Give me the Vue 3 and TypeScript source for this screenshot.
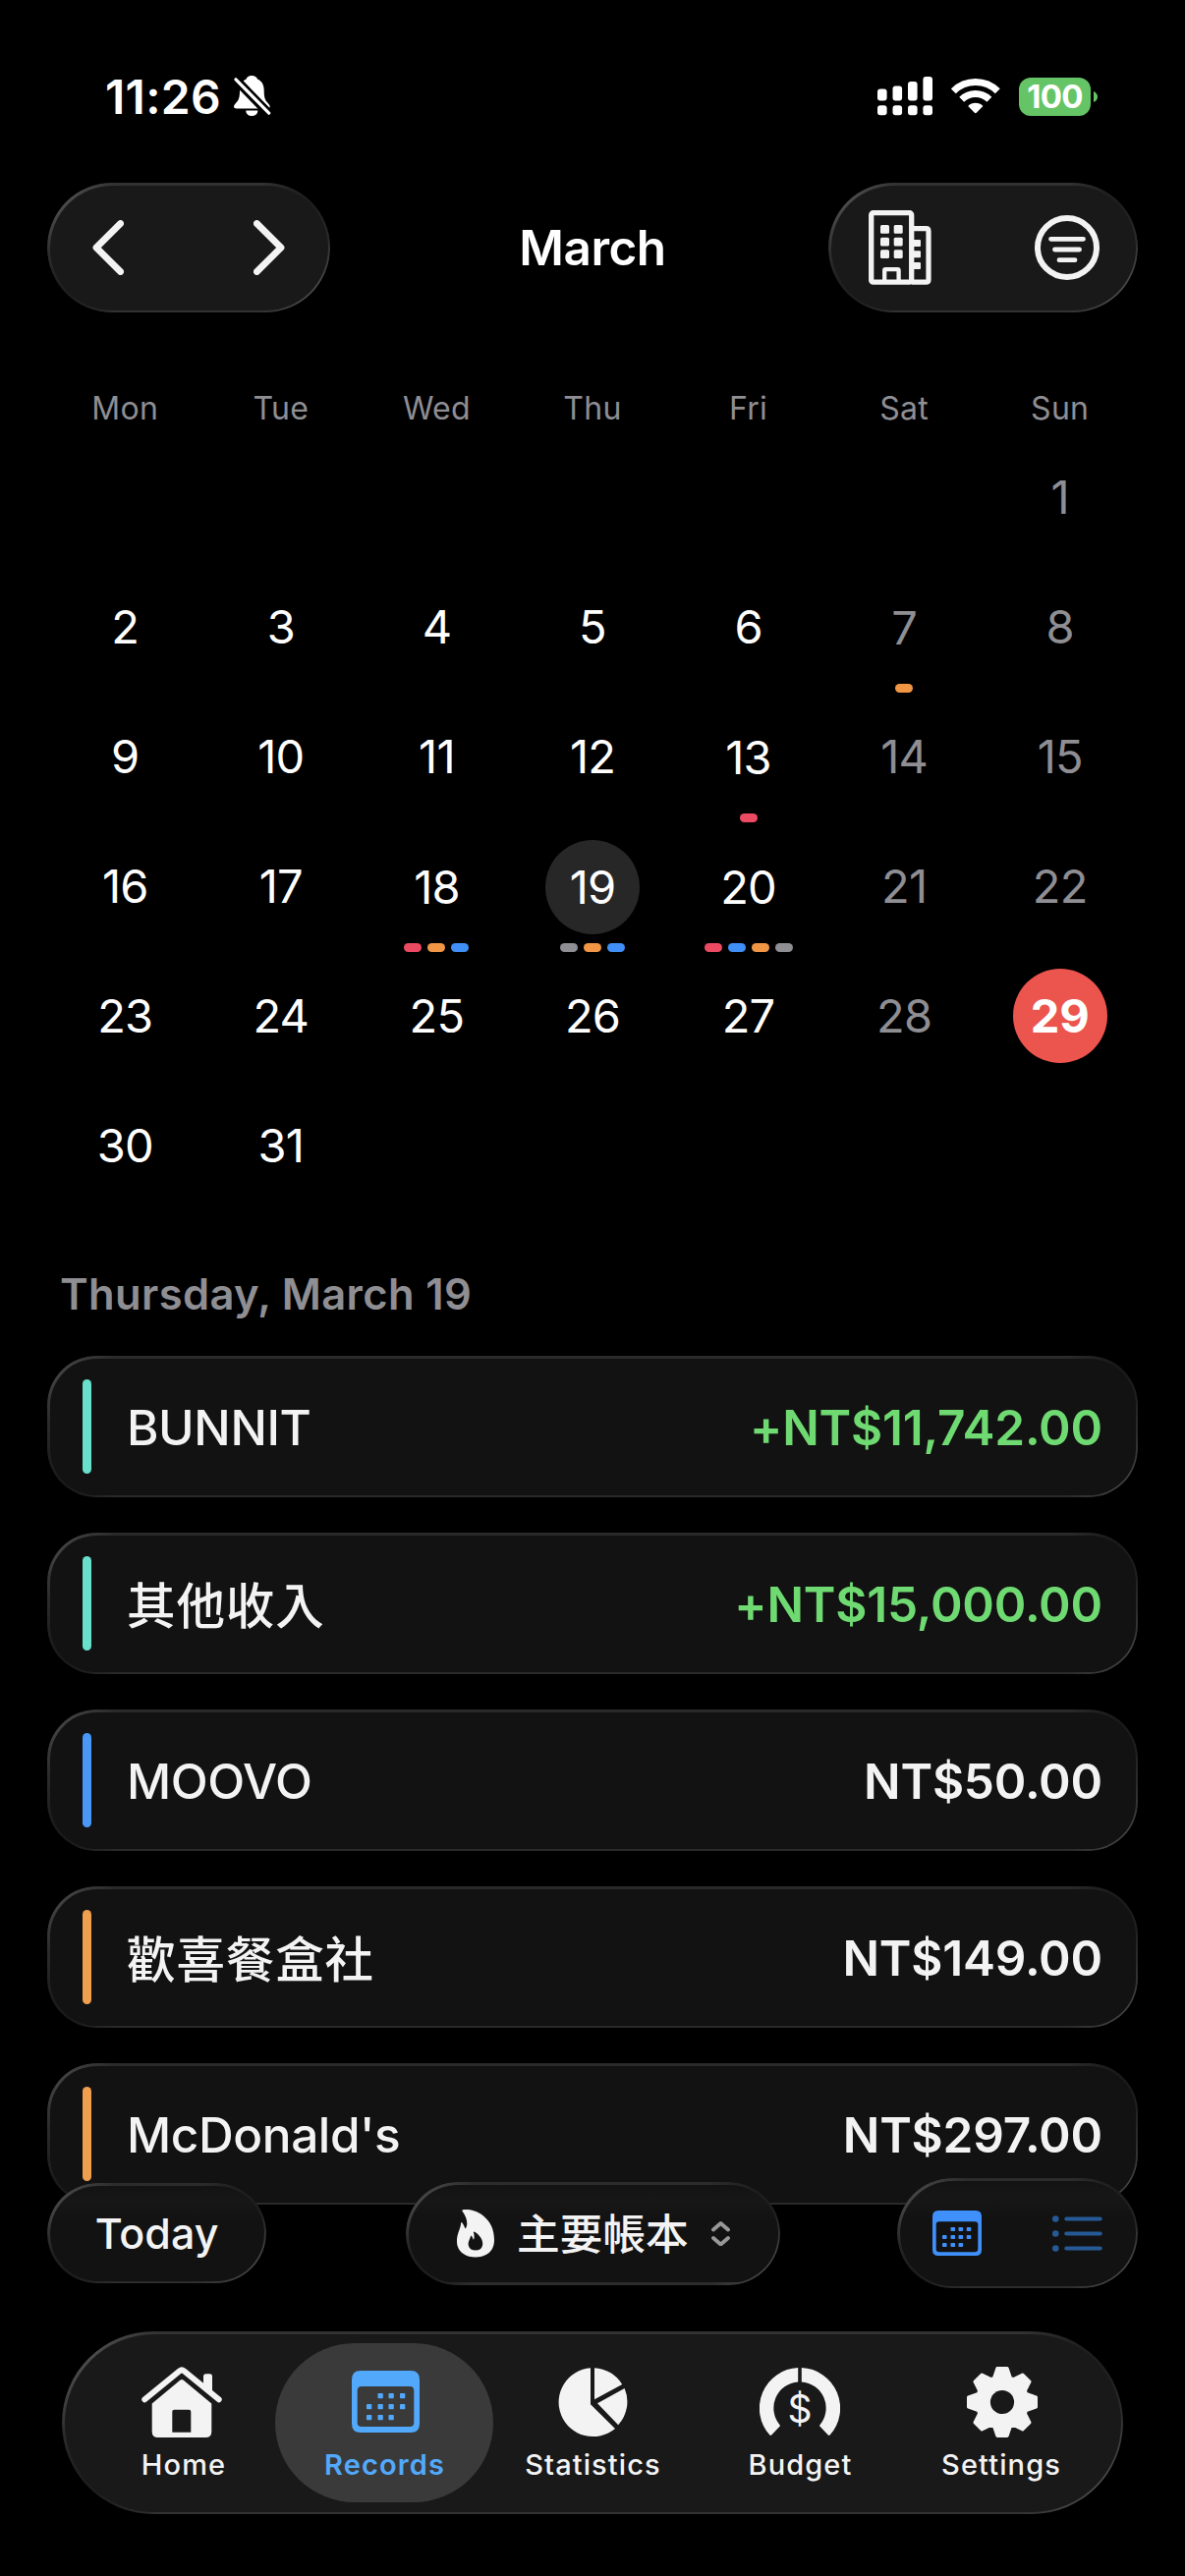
<script setup lang="ts">
interface DayCell {
  day: number | null
  weekend: boolean
  dots: string[]
}

interface RecordRow {
  name: string
  cjk?: boolean
  amount: string
  income: boolean
  color: string
}

const weekdays: string[] = ['Mon', 'Tue', 'Wed', 'Thu', 'Fri', 'Sat', 'Sun']

const RED = '#ec4a62'
const ORANGE = '#f09645'
const BLUE = '#3f8ff7'
const GRAY = '#8e8e93'

const dotMap: Record<number, string[]> = {
  7: [ORANGE],
  13: [RED],
  18: [RED, ORANGE, BLUE],
  19: [GRAY, ORANGE, BLUE],
  20: [RED, BLUE, ORANGE, GRAY],
}

const today = 29
const selected = 19

// March starts on a Sunday; weeks start on Monday.
const cells: DayCell[] = Array.from({ length: 42 }, (_, i) => {
  const n = i - 5
  const day = n >= 1 && n <= 31 ? n : null
  return { day, weekend: i % 7 >= 5, dots: day ? dotMap[day] ?? [] : [] }
})

const records: RecordRow[] = [
  { name: 'BUNNIT', amount: '+NT$11,742.00', income: true, color: '#68e0cc' },
  { name: '其他收入', cjk: true, amount: '+NT$15,000.00', income: true, color: '#68e0cc' },
  { name: 'MOOVO', amount: 'NT$50.00', income: false, color: '#4a97f8' },
  { name: '歡喜餐盒社', cjk: true, amount: 'NT$149.00', income: false, color: '#f09f4f' },
  { name: "McDonald's", amount: 'NT$297.00', income: false, color: '#f09f4f' },
]

// Eight teeth rotated round the origin.
const gearPath = (() => {
  const tooth: [number, number][] = [[-8.3, -24.5], [-5, -34.3], [5, -34.3], [8.3, -24.5]]
  const pts: string[] = []
  for (let k = 0; k < 8; k++) {
    const a = (k * Math.PI) / 4
    for (const [x, y] of tooth) {
      const px = x * Math.cos(a) - y * Math.sin(a)
      const py = x * Math.sin(a) + y * Math.cos(a)
      pts.push(`${px.toFixed(2)} ${py.toFixed(2)}`)
    }
  }
  return `M${pts.join('L')}Z`
})()

const tabDots: [number, number][] = [
  [26.5, 23], [37.5, 23], [49, 23],
  [15, 34], [26.5, 34], [37.5, 34], [49, 34],
  [15, 45], [26.5, 45], [37.5, 45],
]
const switchDots: [number, number][] = [
  [18.5, 17], [26.5, 17], [34.7, 17],
  [10, 25], [18.5, 25], [26.5, 25], [34.7, 25],
  [10, 33], [18.5, 33], [26.5, 33],
]
</script>

<template>
  <div class="screen">
    <header class="status">
      <div class="status-left">
        <span class="time">11:26</span>
        <svg class="bell" width="38" height="42" viewBox="0 0 38 42">
          <path fill="#fff" d="M18.3 0c-3 0-5 1.400-5.600 3.400C8 5.400 6 9.500 6 15c0 7-1 10-4 13-1.400 1.500-2 2.500-2 3.500 0 1.200 1 2 2.500 2H34c1.600 0 2.700-.8 2.700-2 0-1-.6-2-2-3.500-3-3-4-6-4-13 0-5.500-2-9.600-6.700-11.600C23.300 1.400 21.300 0 18.300 0Z" />
          <path fill="#fff" d="M12.200 35.500h12.200a6.100 5.600 0 0 1-12.200 0Z" />
          <path d="M1.500 3.500 36 39" stroke="#000" stroke-width="9" />
          <path d="M2 3.800 35.700 38.200" stroke="#fff" stroke-width="3.200" stroke-linecap="round" />
        </svg>
      </div>
      <div class="status-right">
        <svg width="56" height="40" viewBox="0 0 56 40" fill="#fff">
          <rect x="0" y="12.500" width="9.600" height="12" rx="3" />
          <rect x="15.500" y="9.500" width="9.600" height="15" rx="3" />
          <rect x="31" y="5" width="9.600" height="19.500" rx="3" />
          <rect x="46.400" y="0" width="9.600" height="24.500" rx="3" />
          <rect x="0" y="29.300" width="9.600" height="10" rx="3" />
          <rect x="15.500" y="29.300" width="9.600" height="10" rx="3" />
          <rect x="31" y="29.300" width="9.600" height="10" rx="3" />
          <rect x="46.400" y="29.300" width="9.600" height="10" rx="3" />
        </svg>
        <svg class="wifi" width="50" height="36" viewBox="0 0 50 36">
          <g fill="none" stroke="#fff">
            <path d="M2.300 12.800A32 32 0 0 1 47.300 12.800" stroke-width="7" />
            <path d="M10.700 21.200A20.200 20.200 0 0 1 38.900 21.200" stroke-width="7" />
          </g>
          <path d="M17.200 28A10.600 10.600 0 0 1 32.400 28L25.800 34.800Q24.800 35.600 23.800 34.800Z" fill="#fff" />
        </svg>
        <div class="battery"><span>100</span></div>
        <svg class="nub" width="4" height="11" viewBox="0 0 4 11"><path d="M0 0Q4 2 4 5.500T0 11Z" fill="#65c466" /></svg>
      </div>
    </header>

    <nav class="header">
      <div class="glass pill nav-left">
        <svg width="32" height="56" viewBox="0 0 32 56"><path d="M28.600 3.500 4 28 28.600 52.500" /></svg>
        <svg width="32" height="56" viewBox="0 0 32 56"><path d="M3.400 3.500 28 28 3.400 52.500" /></svg>
      </div>
      <h1>March</h1>
      <div class="glass pill nav-right">
        <svg width="64" height="76" viewBox="0 0 64 76" fill="none" stroke="#f3f3f3">
          <path d="M44 18.700H58.400Q61 18.700 61 21.300V70.700Q61 73.200 58.400 73.200H44" stroke-width="5.200" />
          <rect x="2.700" y="2.700" width="41" height="70.500" rx="2" stroke-width="5.300" />
          <path d="M16.200 73V61.200Q16.200 60.200 17.200 60.200H29.600Q30.600 60.200 30.600 61.200V73" stroke-width="4.300" />
          <g fill="#f3f3f3" stroke="none">
            <rect x="12" y="15" width="9" height="8.700" rx="1.500" /><rect x="25.700" y="15" width="9" height="8.700" rx="1.500" />
            <rect x="12" y="27.700" width="9" height="8.700" rx="1.500" /><rect x="25.700" y="27.700" width="9" height="8.700" rx="1.500" />
            <rect x="12" y="40.300" width="9" height="8.700" rx="1.500" /><rect x="25.700" y="40.300" width="9" height="8.700" rx="1.500" />
            <rect x="45" y="30" width="8" height="7" rx="1" /><rect x="45" y="41.300" width="8" height="7" rx="1" /><rect x="45" y="53" width="8" height="7" rx="1" />
          </g>
        </svg>
        <svg width="66" height="66" viewBox="0 0 66 66" fill="none" stroke="#f3f3f3" stroke-linecap="round">
          <circle cx="33" cy="33" r="30" stroke-width="6" />
          <path d="M16.500 24.300H49.500M20.500 35H45.500M25 45.700H41" stroke-width="4.800" />
        </svg>
      </div>
    </nav>

    <div class="weekdays">
      <span v-for="d in weekdays" :key="d">{{ d }}</span>
    </div>

    <div class="calendar">
      <div v-for="(c, i) in cells" :key="i" class="cell" :class="{ marked: c.dots.length }">
        <div v-if="c.day" class="num" :class="{ weekend: c.weekend, today: c.day === today, selected: c.day === selected }">{{ c.day }}</div>
        <div v-if="c.dots.length" class="dots">
          <i v-for="(color, k) in c.dots" :key="k" :style="{ background: color }"></i>
        </div>
      </div>
    </div>

    <h2>Thursday, March 19</h2>

    <section class="records">
      <article v-for="r in records" :key="r.name" class="glass card">
        <i class="bar" :style="{ background: r.color }"></i>
        <span class="name" :class="{ cjk: r.cjk }">{{ r.name }}</span>
        <span class="amount" :class="{ income: r.income }">{{ r.amount }}</span>
      </article>
    </section>

    <div class="tools">
      <button class="glass pill today-btn">Today</button>
      <button class="glass pill book-btn">
        <svg width="38" height="49" viewBox="0 0 38 49">
          <path fill="#f3f3f3" fill-rule="evenodd" d="M5.400 1.600Q5 .6 6.300.3C11-.6 20 .8 27 6.400 34.500 12.500 38 21 38 31 38 42.500 30 48.500 19 48.500 7.500 48.500 0 42 0 32.500 0 26.500 1.500 23.500 3.200 18.500Q4 16 4.200 13.500 4.400 12.400 5.400 13.400 7.200 15.800 8 18.600 8.500 20 9.300 18.600C11.500 14.600 10 7.500 5.400 1.600ZM17 23.500Q16.600 22 18 22.700C22.500 25.200 26.200 30 26.200 34.600 26.200 39.200 23.400 41.600 19 41.600 14.600 41.600 11.600 39 11.600 34.800 11.600 32 13.200 30.200 14 27.200Q14.300 26 15.200 27.200 16 28.300 16.400 30 17 31 17.400 29.500 18 26.500 17 23.500Z" />
        </svg>
        <span>主要帳本</span>
        <svg class="updown" width="19" height="25" viewBox="0 0 19 25"><path d="M2 8.500 9.500 2 17 8.500M2 17 9.500 23.500 17 17" /></svg>
      </button>
      <div class="glass pill switch">
        <svg width="50" height="46" viewBox="0 0 50 46" fill="#3f90fb">
          <path fill-rule="evenodd" d="M6 0H44Q50 0 50 6V40Q50 46 44 46H6Q0 46 0 40V6Q0 0 6 0ZM7 11.300Q3.700 11.300 3.700 14.500V39Q3.700 42.200 7 42.200H43Q46.300 42.200 46.300 39V14.500Q46.300 11.300 43 11.300Z" />
          <rect v-for="([x, y], k) in switchDots" :key="k" :x="x" :y="y" width="4.600" height="4" rx=".8" />
        </svg>
        <svg width="51" height="37" viewBox="0 0 51 37" fill="#265a96">
          <g v-for="y in [3.500, 18.500, 33.500]" :key="y">
            <circle cx="3.300" :cy="y" r="3.300" />
            <rect x="12.300" :y="y - 2.100" width="38.400" height="4.200" rx="2.100" />
          </g>
        </svg>
      </div>
    </div>

    <footer class="glass pill tabs">
      <div class="tab" style="width: 187px">
        <svg class="house" width="82" height="72" viewBox="0 0 82 72" fill="#f3f3f3">
          <path d="M63 10Q63 7.300 65.500 7.300H69.500Q72 7.300 72 10V28L63 20Z" />
          <path d="M3.300 33.300 38.800 4.300Q41 2.600 43.200 4.300L78.700 33.300" fill="none" stroke="#f3f3f3" stroke-width="6" stroke-linecap="round" />
          <path fill-rule="evenodd" d="M39.500 13.600Q41 12.300 42.500 13.600L71.300 37.500V66Q71.300 72 65.300 72H16.700Q10.700 72 10.700 66V37.500ZM33.300 43.700Q31.300 43.700 31.300 45.700V66.700H50.300V45.700Q50.300 43.700 48.300 43.700Z" />
        </svg>
        <span>Home</span>
      </div>
      <div class="tab active" style="width: 222px">
        <svg class="nudge" width="69" height="72" viewBox="0 -4 69 72" fill="#52a9fb">
          <path fill-rule="evenodd" d="M9 0H60Q69 0 69 9V54Q69 63 60 63H9Q0 63 0 54V9Q0 0 9 0ZM10 16Q5.700 16 5.700 20.300V52.700Q5.700 57 10 57H59Q63.300 57 63.300 52.700V20.300Q63.300 16 59 16Z" />
          <rect v-for="([x, y], k) in tabDots" :key="k" :x="x" :y="y" width="5.300" height="5.300" rx=".8" />
        </svg>
        <span>Records</span>
      </div>
      <div class="tab" style="width: 202px">
        <svg class="nudge" width="74" height="72" viewBox="567 2409 74 72" fill="#f3f3f3">
          <path d="M601 2410.200V2447.200L626 2472A35 35 0 1 1 601 2410.200Z" />
          <path d="M605 2410.200A35 35 0 0 1 633.200 2427L605 2442.300Z" />
          <path d="M635.600 2431A35 35 0 0 1 629.200 2468.300L608 2446.300Z" />
        </svg>
        <span>Statistics</span>
      </div>
      <div class="tab" style="width: 220px">
        <div class="gauge">
          <svg width="82" height="72" viewBox="773 2409 82 72" fill="#f3f3f3">
            <path d="M812.200 2410.100V2424.400A26.700 26.700 0 0 0 793.600 2468.200Q794.200 2469 793.500 2469.800L785.200 2478.600Q784.300 2479.400 783.400 2478.500A41 41 0 0 1 812.200 2410.100Z" />
            <path d="M815.800 2410.100V2424.400A26.700 26.700 0 0 1 834.400 2468.200Q833.800 2469 834.500 2469.800L842.800 2478.600Q843.700 2479.400 844.600 2478.500A41 41 0 0 0 815.800 2410.100Z" />
          </svg>
          <b>$</b>
        </div>
        <span>Budget</span>
      </div>
      <div class="tab" style="width: 189px">
        <svg class="nudge" width="72" height="72" viewBox="-36 -36 72 72">
          <path :d="gearPath" fill="#f3f3f3" stroke="#f3f3f3" stroke-width="3.400" stroke-linejoin="round" />
          <circle r="12.100" fill="#191919" />
        </svg>
        <span>Settings</span>
      </div>
    </footer>
  </div>
</template>

<style>
html,
body {
  background: #000;
}
</style>

<style scoped>
.screen {
  position: relative;
  box-sizing: border-box;
  width: 1206px;
  height: 2622px;
  padding: 0 48px;
  overflow: hidden;
  background: #000;
  color: #fff;
  font-family: Inter, 'Noto Sans CJK TC', sans-serif;
  font-feature-settings: 'calt' 0;
}

.screen * {
  box-sizing: border-box;
}

svg {
  display: block;
  flex: none;
}

.status {
  display: flex;
  justify-content: space-between;
  align-items: center;
  height: 186px;
  padding: 10px 41px 0 59px;
}

.status-left,
.status-right {
  display: flex;
  align-items: center;
}

.time {
  width: 131px;
  font-size: 48px;
  font-weight: 600;
  letter-spacing: 0.300px;
}

.wifi {
  margin-left: 19px;
}

.battery {
  display: flex;
  align-items: center;
  justify-content: center;
  width: 73px;
  height: 39px;
  margin-left: 19px;
  border-radius: 12px;
  background: #65c466;
  font-size: 33px;
  font-weight: 700;
  letter-spacing: -0.700px;
}

.nub {
  margin-left: 3px;
}

.header {
  position: relative;
  display: flex;
  justify-content: space-between;
  align-items: center;
  height: 132px;
}

.glass {
  position: relative;
  background: #191919;
  --hi: #4c4c4c;
  --lo: #1c1c1c;
  --edge: #323232;
  --spot: 70px;
}

.glass::before {
  content: '';
  position: absolute;
  inset: 0;
  padding: 2.500px;
  border-radius: inherit;
  background:
    radial-gradient(circle var(--spot) at 0 0, var(--hi) 35%, transparent),
    radial-gradient(circle var(--spot) at 100% 100%, var(--hi) 35%, transparent),
    radial-gradient(circle var(--spot) at 100% 0, var(--lo) 35%, transparent),
    radial-gradient(circle var(--spot) at 0 100%, var(--lo) 35%, transparent),
    var(--edge);
  -webkit-mask: linear-gradient(#000 0 0) content-box exclude, linear-gradient(#000 0 0);
  mask: linear-gradient(#000 0 0) content-box exclude, linear-gradient(#000 0 0);
  pointer-events: none;
}

.pill {
  display: flex;
  align-items: center;
  border-radius: 999px;
}

.nav-left {
  width: 288px;
  height: 132px;
  justify-content: space-between;
  padding: 0 46px;
}

.nav-left path {
  fill: none;
  stroke: #f3f3f3;
  stroke-width: 6.800;
  stroke-linecap: round;
  stroke-linejoin: round;
}

.nav-right {
  width: 315px;
  height: 132px;
  justify-content: space-between;
  padding: 0 39px 0 41px;
}

h1 {
  flex: 1;
  margin: 0 0 0 27px;
  text-align: center;
  font-size: 49.500px;
  font-weight: 600;
  letter-spacing: -0.500px;
}

.weekdays {
  display: grid;
  grid-template-columns: repeat(7, 1fr);
  height: 49px;
  margin-top: 73px;
  line-height: 49px;
  text-align: center;
  font-size: 32px;
  letter-spacing: 0.300px;
  color: #8e8e93;
}

.calendar {
  display: grid;
  grid-template-columns: repeat(7, 1fr);
  grid-auto-rows: 132px;
}

.cell {
  display: flex;
  flex-direction: column;
  align-items: center;
  height: 132px;
  padding-top: 18px;
}

.cell.marked {
  padding-top: 19px;
}

.num {
  flex: none;
  width: 96px;
  height: 96px;
  border-radius: 50%;
  line-height: 96px;
  text-align: center;
  font-size: 47px;
  letter-spacing: -0.800px;
}

.num.weekend {
  color: #8e8e93;
}

.num.selected {
  background: #272727;
}

.num.today {
  background: #ec544e;
  color: #fff;
  font-weight: 700;
  letter-spacing: -0.200px;
}

.dots {
  display: flex;
  gap: 6px;
  margin-top: 9px;
}

.dots i {
  width: 18px;
  height: 9px;
  border-radius: 4.500px;
}

h2 {
  height: 51px;
  margin: 60px 0 37px;
  padding-left: 13px;
  line-height: 51px;
  font-size: 43.500px;
  font-weight: 600;
  letter-spacing: 0.350px;
  color: #8e8e93;
}

.records {
  display: flex;
  flex-direction: column;
  gap: 36px;
}

.card {
  display: flex;
  align-items: center;
  flex: none;
  height: 144px;
  padding: 0 36px;
  border-radius: 50px;
  background: #121212;
  --edge: #2a2a2a;
  --hi: #404040;
  --lo: #1a1a1a;
}

.bar {
  width: 9px;
  height: 96px;
  border-radius: 4.500px;
}

.name {
  flex: 1;
  margin-left: 36px;
  padding-top: 2px;
  font-size: 49.500px;
  font-weight: 500;
  letter-spacing: -0.400px;
  color: #f3f3f3;
}

.name.cjk {
  padding: 0 0 2px;
  letter-spacing: 0.900px;
}

.amount {
  padding-top: 2px;
  font-size: 49.500px;
  font-weight: 600;
  letter-spacing: -0.200px;
  color: #f3f3f3;
}

.amount.income {
  color: #6fd972;
}

.tools {
  position: absolute;
  left: 48px;
  right: 48px;
  top: 2217px;
  display: flex;
  align-items: center;
  justify-content: space-between;
  height: 112px;
}

.tools .glass {
  background: linear-gradient(#121212 0, #171717 18px, #121212 40px);
  --edge: #2c2c2c;
  --hi: #444;
  --lo: #1e1e1e;
}

button {
  border: 0;
  margin: 0;
  padding: 0;
  font-family: inherit;
  color: #f3f3f3;
}

.today-btn {
  justify-content: center;
  width: 223px;
  height: 102px;
  font-size: 43px;
  font-weight: 500;
}

.book-btn {
  width: 381px;
  height: 105px;
  margin-left: 23px;
  padding-left: 52px;
  font-size: 43.700px;
  font-weight: 500;
}

.book-btn span {
  margin-left: 23px;
  padding-bottom: 5px;
}

.updown {
  margin-left: 23px;
}

.updown path {
  fill: none;
  stroke: #989898;
  stroke-width: 3.800;
  stroke-linecap: round;
  stroke-linejoin: round;
}

.switch {
  justify-content: space-between;
  width: 245px;
  height: 112px;
  padding: 0 36px;
}

.tabs {
  position: absolute;
  left: 63px;
  right: 63px;
  top: 2373px;
  height: 186px;
  padding: 0 30px;
  --spot: 100px;
}

.tab {
  display: flex;
  flex-direction: column;
  align-items: center;
  height: 162px;
  padding-top: 24px;
  border-radius: 81px;
  font-size: 29px;
  font-weight: 500;
  letter-spacing: 1.100px;
  color: #f3f3f3;
}

.tab > span {
  margin-top: 10px;
  padding-left: 1px;
  line-height: 36px;
}

.tab.active {
  background: #3a3a3a;
  color: #52a9fb;
  font-weight: 600;
}

.gauge {
  position: relative;
}

.gauge b {
  position: absolute;
  inset: 14px 0 auto;
  line-height: 58px;
  text-align: center;
  font-size: 39px;
  font-weight: 400;
  letter-spacing: 0;
}

.nudge {
  transform: translateX(1px);
}

.house {
  transform: translateX(-2px);
}
</style>
